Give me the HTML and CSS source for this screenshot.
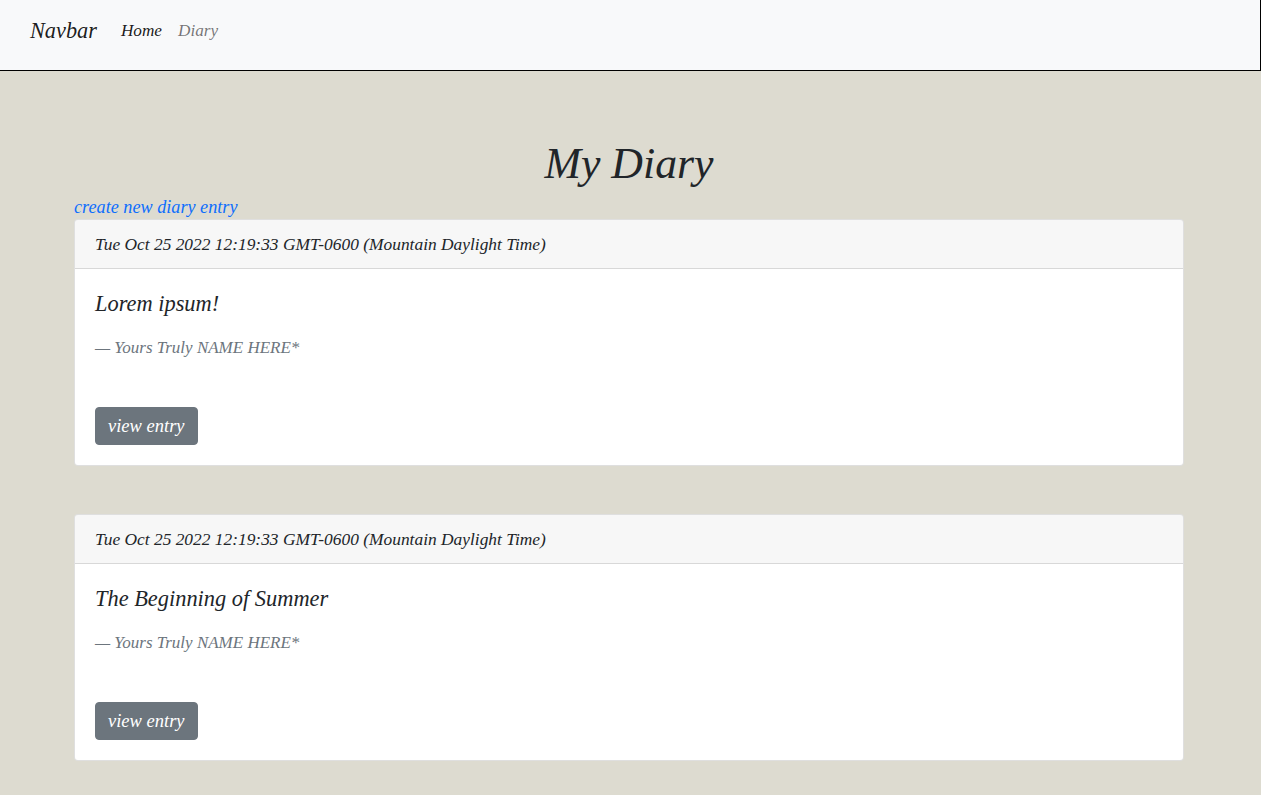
FILE: index.html
```html
<!DOCTYPE html>
<html lang="en">
<head>
<meta charset="utf-8">
<title>My Diary</title>
<link rel="stylesheet" href="styles.css">
</head>
<body>
<nav class="navbar">
  <a class="brand" href="#">Navbar</a>
  <a class="nav-link active" href="#">Home</a>
  <a class="nav-link" href="#">Diary</a>
</nav>
<main class="container">
  <h1 class="title">My Diary</h1>
  <a class="create-link" href="#">create new diary entry</a>
  <div class="card">
    <div class="card-header">Tue Oct 25 2022 12:19:33 GMT-0600 (Mountain Daylight Time)</div>
    <div class="card-body">
      <h5 class="card-title">Lorem ipsum!</h5>
      <footer class="quote-footer">— Yours Truly NAME HERE*</footer>
      <a class="btn" href="#">view entry</a>
    </div>
  </div>
  <div class="card">
    <div class="card-header">Tue Oct 25 2022 12:19:33 GMT-0600 (Mountain Daylight Time)</div>
    <div class="card-body">
      <h5 class="card-title">The Beginning of Summer</h5>
      <footer class="quote-footer">— Yours Truly NAME HERE*</footer>
      <a class="btn" href="#">view entry</a>
    </div>
  </div>
</main>
</body>
</html>
```
FILE: styles.css
```css
html {
  background: #dddbd0;
}
body {
  margin: 0;
  font-family: "Liberation Serif", "Times New Roman", serif;
  font-style: italic;
  color: #212529;
  background: #dddbd0;
  min-height: 100vh;
}
a {
  text-decoration: none;
}
.navbar {
  display: flex;
  align-items: center;
  height: 62px;
  padding: 0 0 8px 30px;
  background: #f8f9fa;
  border-bottom: 1px solid #000;
  border-right: 1px solid #000;
}
.brand {
  font-size: 22.3px;
  line-height: 30px;
  color: rgba(0, 0, 0, 0.9);
  margin-right: 16px;
}
.nav-link {
  font-size: 17.2px;
  line-height: 24px;
  padding: 0 8px;
  color: rgba(0, 0, 0, 0.55);
}
.nav-link.active {
  color: rgba(0, 0, 0, 0.9);
}
.container {
  padding: 68px 77px 35px 74px;
  display: flex;
  flex-direction: column;
}
.title {
  margin: 0 0 8px;
  text-align: center;
  font-weight: 400;
  font-size: 43.8px;
  line-height: 48px;
}
.create-link {
  align-self: flex-start;
  font-size: 18.2px;
  line-height: 24px;
  color: #0d6efd;
}
.card {
  background: #fff;
  border: 1px solid rgba(0, 0, 0, 0.125);
  border-radius: 4px;
  margin-bottom: 48px;
  overflow: hidden;
}
.card:last-child {
  margin-bottom: 0;
}
.card-header {
  padding: 12px 20px;
  font-size: 17.4px;
  line-height: 24px;
  background: rgba(0, 0, 0, 0.03);
  border-bottom: 1px solid rgba(0, 0, 0, 0.125);
}
.card-body {
  padding: 20px;
  display: flex;
  flex-direction: column;
  align-items: flex-start;
}
.card-title {
  margin: 3px 0 0;
  font-weight: 400;
  font-size: 22.4px;
  line-height: 24px;
}
.quote-footer {
  margin-top: 20px;
  font-size: 17px;
  line-height: 24px;
  color: #6c757d;
}
.btn {
  margin-top: 47px;
  padding: 6px 12px;
  font-size: 18.5px;
  line-height: 24px;
  color: #fff;
  background: #6c757d;
  border: 1px solid #6c757d;
  border-radius: 4px;
}
```
